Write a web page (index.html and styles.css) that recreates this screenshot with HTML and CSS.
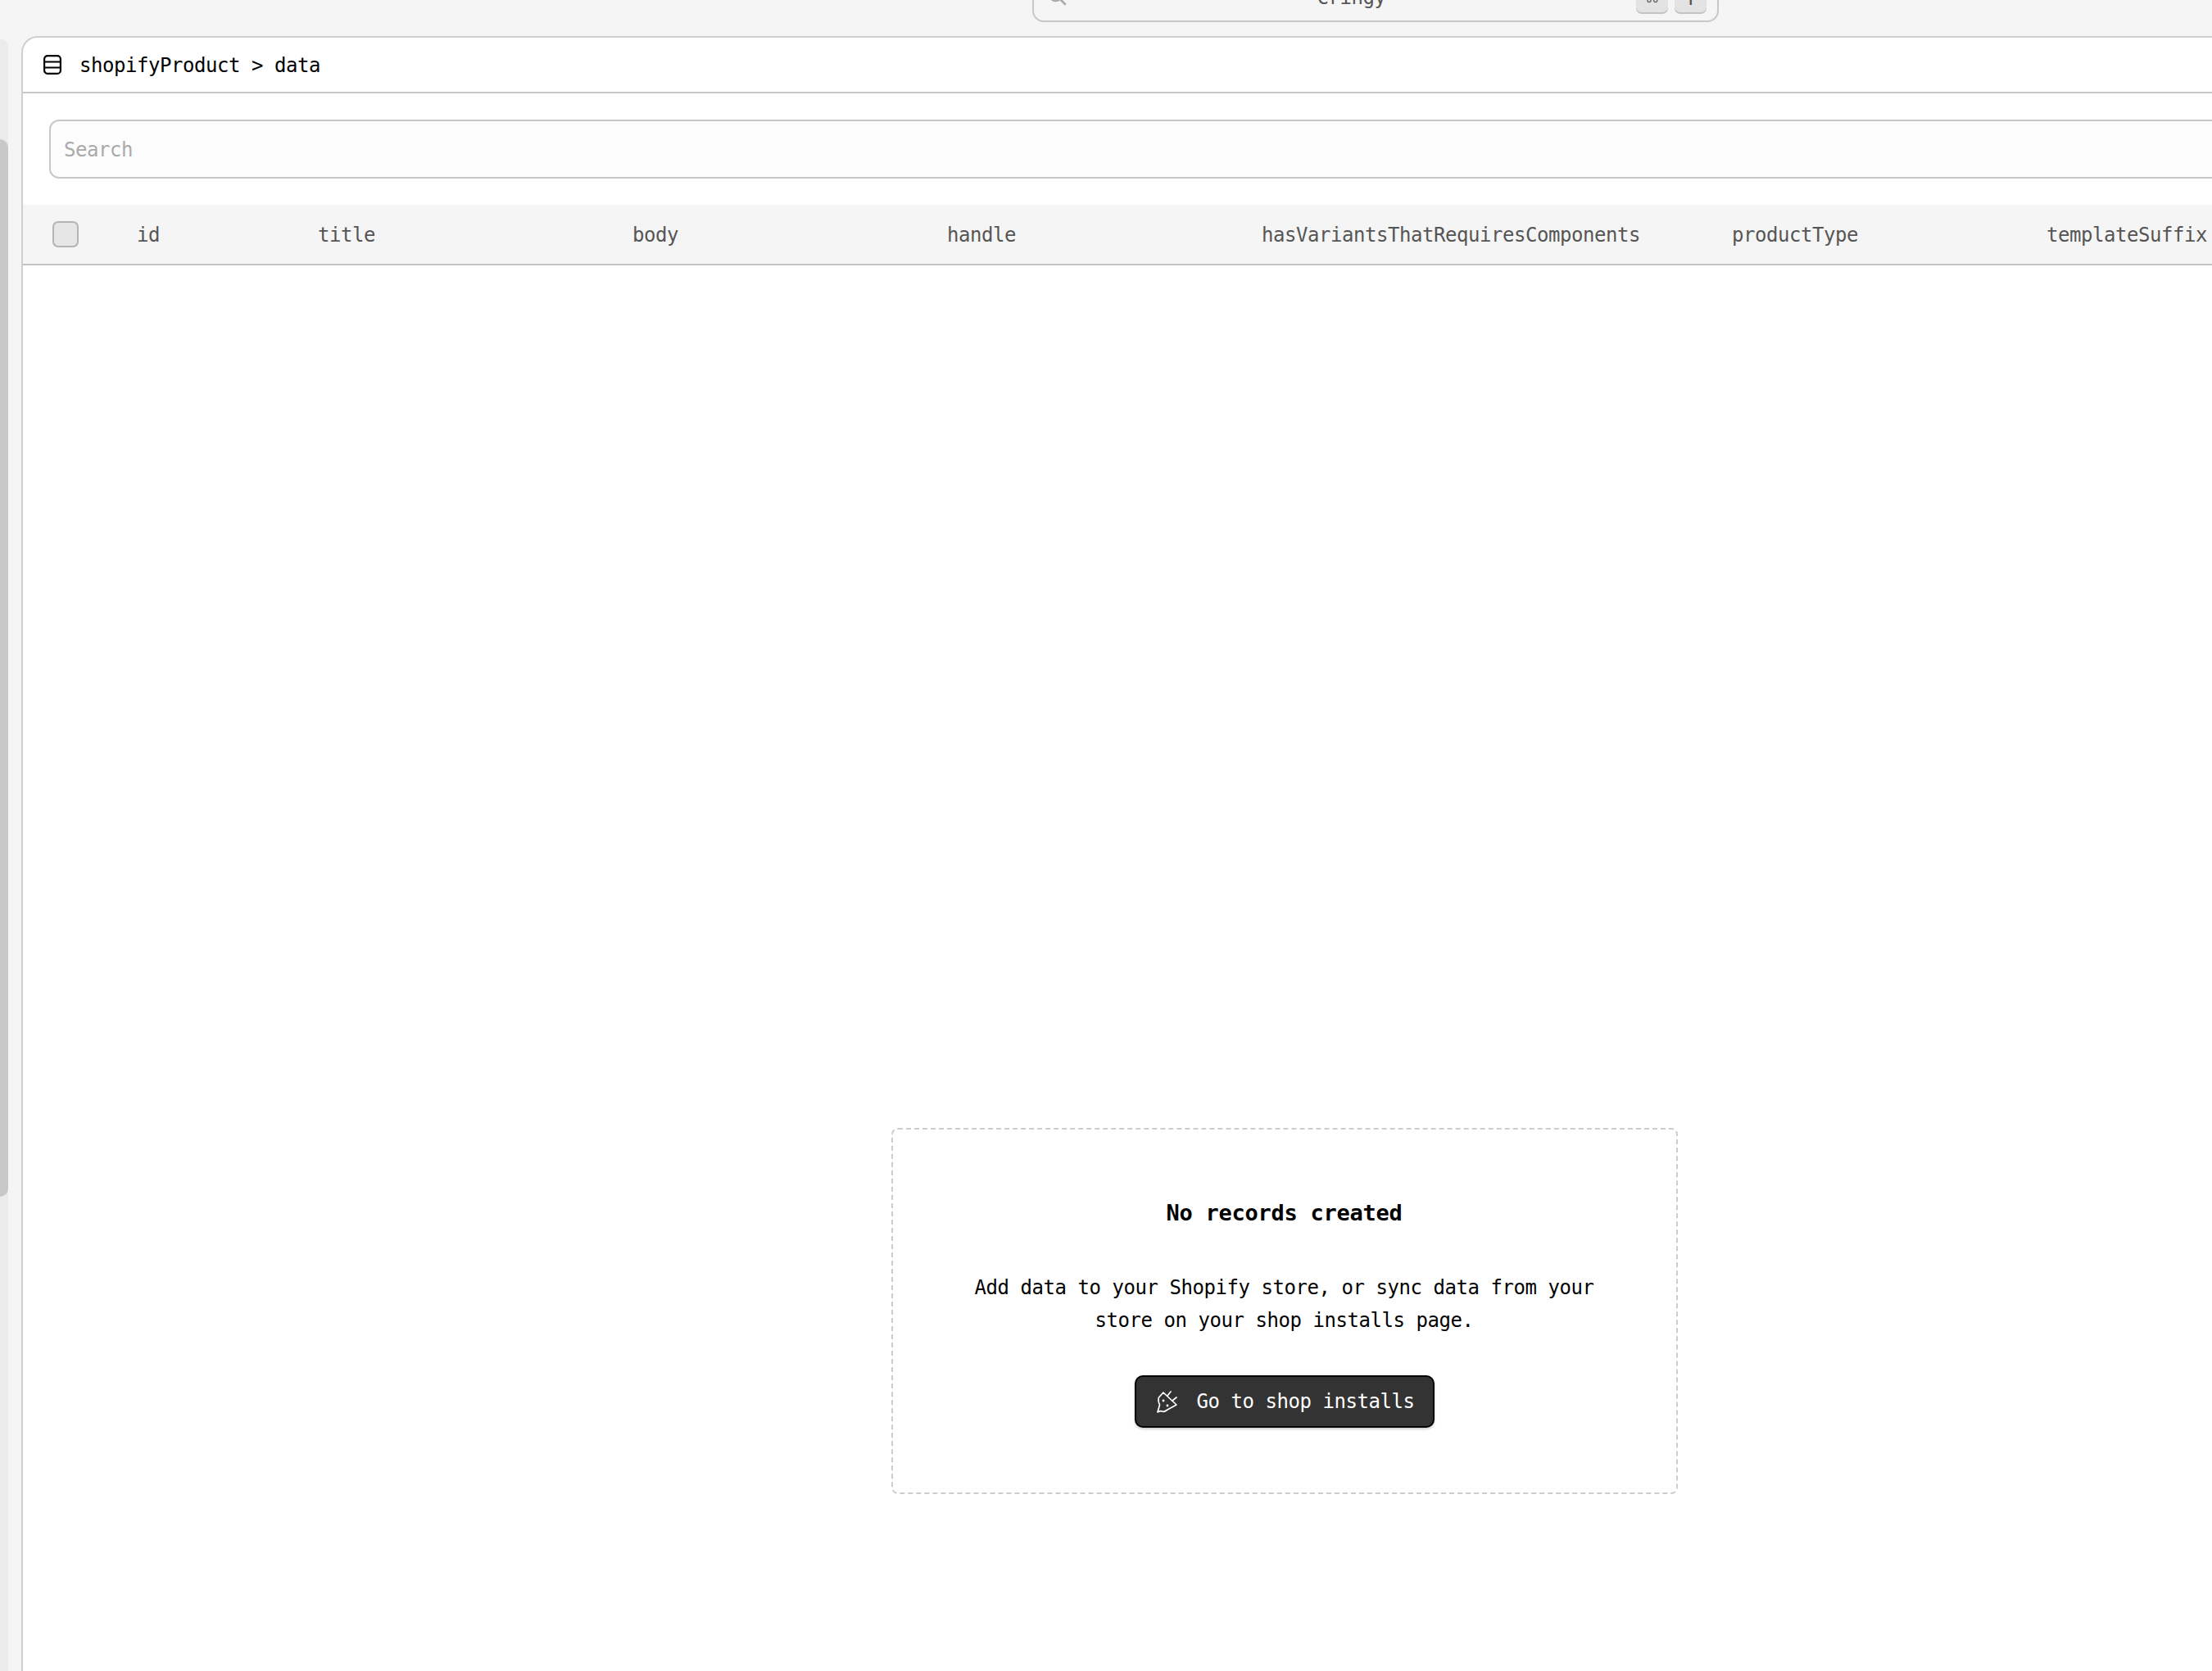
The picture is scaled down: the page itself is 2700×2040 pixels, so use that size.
FILE: index.html
```html
<!DOCTYPE html>
<html lang="en">
<head>
    <meta charset="utf-8" />
    <title>shopifyProduct data</title>
    <link rel="stylesheet" href="styles.css">
</head>
<body>
    <div class="scrollbar">
        <div class="scrollbar-thumb"></div>
    </div>

    <div class="app">
        <div class="topbar">
            <div class="command-search">
                <svg class="command-icon" viewBox="0 0 24 24" fill="none" stroke="currentColor" stroke-width="2.6" stroke-linecap="round">
                    <circle cx="10.5" cy="10.5" r="7.5"></circle>
                    <path d="M16 16l6 6"></path>
                </svg>
                <span class="command-text">Cringy</span>
                <span class="key">⌘</span>
                <span class="key">T</span>
            </div>
        </div>

        <div class="card">
            <div class="card-title">
                <svg class="title-icon" viewBox="0 0 22 24" fill="none" stroke="currentColor" stroke-width="2.2">
                    <rect x="1.1" y="1.1" width="19.8" height="21.8" rx="4"></rect>
                    <path d="M1 8.5h20M1 15.5h20"></path>
                </svg>
                <span class="title-text">shopifyProduct &gt; data</span>
            </div>

            <div class="search-row">
                <input class="search-input" type="text" placeholder="Search" />
            </div>

            <div class="table-head">
                <div class="cell cell-check"><span class="checkbox"></span></div>
                <div class="cell cell-id">id</div>
                <div class="cell cell-std">title</div>
                <div class="cell cell-std">body</div>
                <div class="cell cell-std">handle</div>
                <div class="cell cell-wide">hasVariantsThatRequiresComponents</div>
                <div class="cell cell-std">productType</div>
                <div class="cell cell-std">templateSuffix</div>
            </div>

            <div class="table-body">
                <div class="empty-box">
                    <h2 class="empty-title">No records created</h2>
                    <p class="empty-text">Add data to your Shopify store, or sync data from your store on your shop installs page.</p>
                    <button class="empty-button">
                        <svg class="plug-icon" viewBox="11 7 27 27" fill="none" stroke="currentColor" stroke-width="1.7" stroke-linecap="round" stroke-linejoin="round">
                            <path d="M20 9L14.5 15C13.5 18 14 21 15.5 24C14.5 28 13.5 31 13 33C15 32 17 31 18.5 32C20.5 33 22.5 32 25 30L36 24Z"></path>
                            <path d="M25 13L29 8M31 19L36 15"></path>
                            <circle cx="20" cy="19" r="0.6"></circle>
                            <circle cx="25" cy="25" r="0.6"></circle>
                        </svg>
                        <span>Go to shop installs</span>
                    </button>
                </div>
            </div>
        </div>
    </div>
</body>
</html>
```

FILE: styles.css
```css
* {
    margin: 0;
    padding: 0;
    box-sizing: border-box;
}

html,
body {
    height: 100%;
    overflow: hidden;
}

body {
    display: flex;
    background: #f5f5f5;
    font-family: 'DejaVu Sans Mono', monospace;
    font-size: 24px;
    letter-spacing: -0.45px;
    color: #000;
}

.scrollbar {
    width: 10px;
    margin-top: 47px;
    flex-shrink: 0;
    background: #ececec;
    border-top-right-radius: 10px;
}

.scrollbar-thumb {
    height: 1291px;
    margin-top: 123px;
    background: #c8c8c8;
    border-radius: 0 10px 10px 0;
}

.app {
    width: 3099px;
    flex-shrink: 0;
    display: flex;
    flex-direction: column;
    padding-left: 16px;
}

.topbar {
    height: 44px;
    flex-shrink: 0;
    padding-left: 1234px;
}

.command-search {
    width: 838px;
    height: 64px;
    margin-top: -37px;
    display: flex;
    align-items: center;
    gap: 8px;
    padding: 0 13px 0 16px;
    border: 2px solid #c8c8c8;
    border-radius: 14px;
    color: #555;
}

.command-icon {
    width: 24px;
    height: 24px;
    color: #aaa;
}

.command-text {
    flex: 1;
    padding-top: 3px;
    text-align: center;
}

.key {
    width: 39px;
    height: 40px;
    display: flex;
    align-items: center;
    justify-content: center;
    padding-top: 6px;
    background: #e3e3e3;
    border-radius: 7px;
    box-shadow: 0 2px 0 #c4c4c4;
}

.card {
    flex: 1;
    display: flex;
    flex-direction: column;
    background: #fff;
    border: 2px solid #cfcfcf;
    border-bottom: none;
    border-top-left-radius: 20px;
}

.card-title {
    height: 68px;
    flex-shrink: 0;
    display: flex;
    align-items: center;
    gap: 22px;
    padding-left: 25px;
    border-bottom: 2px solid #c8c8c8;
}

.title-icon {
    width: 22px;
    height: 24px;
}

.title-text {
    padding-top: 1px;
}

.search-row {
    padding: 32px 0 32px 32px;
}

.search-input {
    display: block;
    width: 100%;
    height: 72px;
    padding: 1px 16px 0;
    background: #fcfcfc;
    border: 2px solid #c8c8c8;
    border-radius: 12px;
    font: inherit;
    letter-spacing: inherit;
    color: #000;
    outline: none;
}

.search-input::placeholder {
    color: #aaa;
}

.table-head {
    height: 74px;
    flex-shrink: 0;
    display: flex;
    align-items: center;
    background: #f5f5f5;
    border-bottom: 2px solid #c4c4c4;
    color: #555;
}

.cell {
    flex-shrink: 0;
    padding: 1px 0 0 32px;
}

.cell-check {
    width: 105px;
    padding: 0 0 0 36px;
    display: flex;
}

.cell-id {
    width: 223px;
    padding-left: 34px;
}

.cell-std {
    width: 384px;
}

.cell-wide {
    width: 574px;
}

.checkbox {
    width: 32px;
    height: 32px;
    background: #e6e6e6;
    border: 2px solid #b4b4b4;
    border-radius: 7px;
}

.table-body {
    flex: 1;
    display: flex;
    justify-content: center;
    padding-top: 1053px;
}

.empty-box {
    width: 960px;
    height: 447px;
    display: flex;
    flex-direction: column;
    align-items: center;
    padding: 84px 90px 0;
    border: 2px dashed #cdcdcd;
    border-radius: 8px;
    text-align: center;
}

.empty-title {
    font-size: 27px;
    font-weight: 700;
    letter-spacing: -0.25px;
    line-height: 36px;
}

.empty-text {
    margin-top: 53px;
    line-height: 40px;
}

.empty-button {
    width: 366px;
    height: 64px;
    margin-top: 47px;
    flex-shrink: 0;
    display: flex;
    align-items: center;
    gap: 23px;
    padding-left: 24px;
    background: #333;
    border: 2px solid #000;
    border-radius: 10px;
    box-shadow: 0 2px 3px rgba(0, 0, 0, 0.2);
    color: #fff;
    font: inherit;
    letter-spacing: inherit;
}

.plug-icon {
    width: 27px;
    height: 27px;
}
```
